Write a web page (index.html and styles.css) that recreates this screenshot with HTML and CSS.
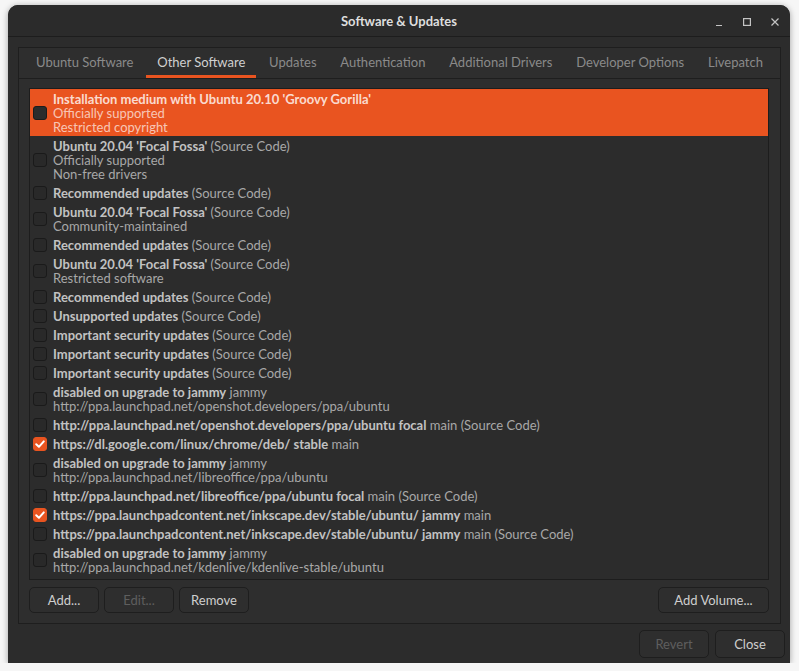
FILE: index.html
```html
<!DOCTYPE html>
<html>
<head>
<meta charset="utf-8">
<title>Software &amp; Updates</title>
<link rel="stylesheet" href="styles.css">
</head>
<body>
<div class="window">
  <div class="titlebar">
    <div></div>
    <div class="title">Software &amp; Updates</div>
    <div class="controls">
      <span class="ctl"><svg width="10" height="10" viewBox="0 0 10 10"><path d="M2 8.5H8" stroke="#c4c4c4" stroke-width="1.2"/></svg></span>
      <span class="ctl"><svg width="10" height="10" viewBox="0 0 10 10"><rect x="1.6" y="1.6" width="6.8" height="6.8" fill="none" stroke="#c4c4c4" stroke-width="1.2"/></svg></span>
      <span class="ctl"><svg width="10" height="10" viewBox="0 0 10 10"><path d="M1.5 1.5L8.5 8.5M8.5 1.5L1.5 8.5" stroke="#c4c4c4" stroke-width="1.2"/></svg></span>
    </div>
  </div>
  <div class="content">
    <div class="notebook">
      <div class="tabs">
        <div class="tab">Ubuntu Software</div>
        <div class="tab active">Other Software</div>
        <div class="tab">Updates</div>
        <div class="tab">Authentication</div>
        <div class="tab">Additional Drivers</div>
        <div class="tab">Developer Options</div>
        <div class="tab">Livepatch</div>
      </div>
      <div class="page">
        <div class="list">
          <div class="row selected"><span class="cb"></span><div class="txt"><div><b>Installation medium with Ubuntu 20.10 'Groovy Gorilla'</b></div><div>Officially supported</div><div>Restricted copyright</div></div></div>
          <div class="row"><span class="cb"></span><div class="txt"><div><b>Ubuntu 20.04 'Focal Fossa'</b> (Source Code)</div><div>Officially supported</div><div>Non-free drivers</div></div></div>
          <div class="row"><span class="cb"></span><div class="txt"><div><b>Recommended updates</b> (Source Code)</div></div></div>
          <div class="row"><span class="cb"></span><div class="txt"><div><b>Ubuntu 20.04 'Focal Fossa'</b> (Source Code)</div><div>Community-maintained</div></div></div>
          <div class="row"><span class="cb"></span><div class="txt"><div><b>Recommended updates</b> (Source Code)</div></div></div>
          <div class="row"><span class="cb"></span><div class="txt"><div><b>Ubuntu 20.04 'Focal Fossa'</b> (Source Code)</div><div>Restricted software</div></div></div>
          <div class="row"><span class="cb"></span><div class="txt"><div><b>Recommended updates</b> (Source Code)</div></div></div>
          <div class="row"><span class="cb"></span><div class="txt"><div><b>Unsupported updates</b> (Source Code)</div></div></div>
          <div class="row"><span class="cb"></span><div class="txt"><div><b>Important security updates</b> (Source Code)</div></div></div>
          <div class="row"><span class="cb"></span><div class="txt"><div><b>Important security updates</b> (Source Code)</div></div></div>
          <div class="row"><span class="cb"></span><div class="txt"><div><b>Important security updates</b> (Source Code)</div></div></div>
          <div class="row"><span class="cb"></span><div class="txt"><div><b>disabled on upgrade to jammy</b> jammy</div><div>http://ppa.launchpad.net/openshot.developers/ppa/ubuntu</div></div></div>
          <div class="row"><span class="cb"></span><div class="txt"><div><b>http://ppa.launchpad.net/openshot.developers/ppa/ubuntu focal</b> main (Source Code)</div></div></div>
          <div class="row"><span class="cb on"><svg width="14" height="14" viewBox="0 0 14 14"><path d="M3.2 7.2L5.9 9.8L10.8 4.4" fill="none" stroke="#ffffff" stroke-width="2" stroke-linecap="round" stroke-linejoin="round"/></svg></span><div class="txt"><div><b>https://dl.google.com/linux/chrome/deb/ stable</b> main</div></div></div>
          <div class="row"><span class="cb"></span><div class="txt"><div><b>disabled on upgrade to jammy</b> jammy</div><div>http://ppa.launchpad.net/libreoffice/ppa/ubuntu</div></div></div>
          <div class="row"><span class="cb"></span><div class="txt"><div><b>http://ppa.launchpad.net/libreoffice/ppa/ubuntu focal</b> main (Source Code)</div></div></div>
          <div class="row"><span class="cb on"><svg width="14" height="14" viewBox="0 0 14 14"><path d="M3.2 7.2L5.9 9.8L10.8 4.4" fill="none" stroke="#ffffff" stroke-width="2" stroke-linecap="round" stroke-linejoin="round"/></svg></span><div class="txt"><div><b>https://ppa.launchpadcontent.net/inkscape.dev/stable/ubuntu/ jammy</b> main</div></div></div>
          <div class="row"><span class="cb"></span><div class="txt"><div><b>https://ppa.launchpadcontent.net/inkscape.dev/stable/ubuntu/ jammy</b> main (Source Code)</div></div></div>
          <div class="row"><span class="cb"></span><div class="txt"><div><b>disabled on upgrade to jammy</b> jammy</div><div>http://ppa.launchpad.net/kdenlive/kdenlive-stable/ubuntu</div></div></div>
        </div>
        <div class="list-buttons">
          <button class="btn w70">Add...</button>
          <button class="btn w70 disabled">Edit...</button>
          <button class="btn w70">Remove</button>
          <span class="spacer"></span>
          <button class="btn w111">Add Volume...</button>
        </div>
      </div>
    </div>
    <div class="actions">
      <button class="btn big disabled">Revert</button>
      <button class="btn big">Close</button>
    </div>
  </div>
</div>
</body>
</html>
```

FILE: styles.css
```css
* { box-sizing: border-box; }
html, body { margin: 0; padding: 0; }
body {
  background: #f6f6f6;
  font-family: Lato, "Noto Sans", "DejaVu Sans", sans-serif;
  font-size: 13px;
  padding: 5px 0 0 8px;
}
.window {
  width: 782px;
  height: 658px;
  background: #2c2c2c;
  border-radius: 10px 10px 0 0;
  box-shadow: 0 1px 6px rgba(0,0,0,0.35);
  display: flex;
  flex-direction: column;
  overflow: hidden;
}
.titlebar {
  height: 32px;
  border-bottom: 1px solid #1d1d1d;
  display: grid;
  grid-template-columns: 1fr auto 1fr;
  align-items: center;
  background: #2b2b2b;
}
.title {
  color: #dedede;
  font-weight: bold;
  font-size: 13px;
  padding-top: 1px;
}
.controls {
  justify-self: end;
  display: flex;
  padding-right: 1px;
  padding-top: 2px;
}
.ctl {
  width: 28px;
  height: 29px;
  display: flex;
  align-items: center;
  justify-content: center;
}
.content {
  padding: 10px 5px 5px 10px;
  display: flex;
  flex-direction: column;
}
.notebook {
  width: 763px;
  border: 1px solid #1e1e1e;
  background: #2e2e2e;
}
.tabs {
  height: 31px;
  border-bottom: 1px solid #1e1e1e;
  display: flex;
  justify-content: space-between;
  padding: 0 6px;
}
.tab {
  padding: 0 11px;
  line-height: 29px;
  color: #8a8a8a;
}
.tab.active {
  color: #d0d0d0;
  box-shadow: inset 0 -3px 0 #e95420;
}
.page {
  padding: 9px 11px 10px 10px;
}
.list {
  height: 492px;
  border: 1px solid #1d1d1d;
  background: #2c2c2c;
  overflow: hidden;
}
.row {
  display: flex;
  align-items: center;
  padding: 2.5px 0 2.5px 3px;
  line-height: 14px;
  color: #a8a8a8;
}
.row b { color: #c2c2c2; }
.row.selected {
  background: #e95420;
  color: rgba(255,255,255,0.68);
}
.row.selected b { color: rgba(255,255,255,0.8); }
.cb {
  flex: none;
  width: 14px;
  height: 14px;
  border: 1px solid #1a1a1a;
  border-radius: 3px;
  background: #292929;
  margin-right: 6px;
  display: flex;
  align-items: center;
  justify-content: center;
}
.row.selected .cb { background: #2c2c2c; border-color: #1c1c1c; }
.cb.on {
  background: #e95420;
  border-color: #e95420;
}
.cb.on svg { flex: none; }
.txt { white-space: nowrap; }
.list-buttons {
  display: flex;
  gap: 5px;
  margin-top: 7px;
}
.spacer { flex: 1; }
.btn {
  font-family: inherit;
  font-size: 13px;
  height: 26px;
  background: #2e2e2e;
  border: 1px solid #1e1e1e;
  border-radius: 5px;
  color: #cfcfcf;
  padding: 0;
}
.btn.disabled { color: #5e5e5e; }
.w70 { width: 70px; }
.w111 { width: 111px; }
.actions {
  display: flex;
  justify-content: flex-end;
  gap: 6px;
  margin-top: 6px;
}
.btn.big {
  width: 70px;
  height: 28px;
}
```
